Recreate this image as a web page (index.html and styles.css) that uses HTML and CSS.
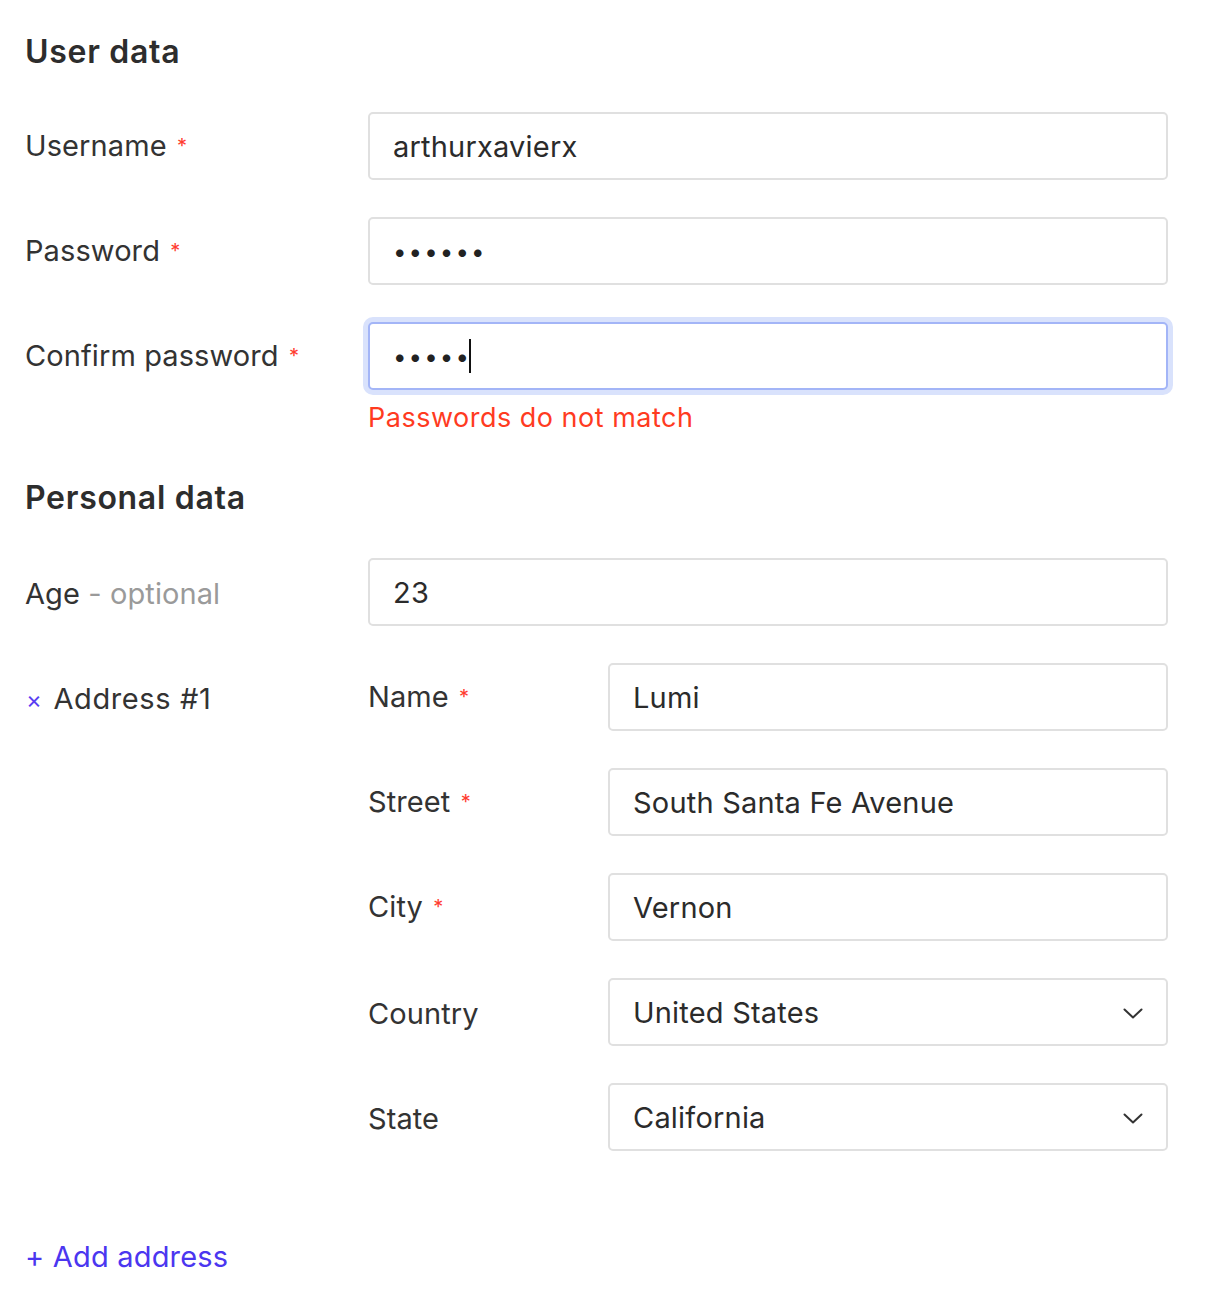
FILE: index.html
```html
<!DOCTYPE html>
<html lang="en">
<head>
<meta charset="utf-8">
<title>Form</title>
<link rel="stylesheet" href="styles.css">
</head>
<body>
<form class="form">
  <h2 class="section-title">User data</h2>

  <div class="row">
    <label class="label">Username <span class="req">*</span></label>
    <div class="control"><input class="input" type="text" value="arthurxavierx"></div>
  </div>

  <div class="row">
    <label class="label">Password <span class="req">*</span></label>
    <div class="control"><div class="input dots">••••••</div></div>
  </div>

  <div class="row row-error">
    <label class="label">Confirm password <span class="req">*</span></label>
    <div class="control">
      <div class="input dots focused">•••••<span class="caret"></span></div>
    </div>
  </div>
  <div class="row-msg">
    <div></div>
    <div class="error">Passwords do not match</div>
  </div>

  <h2 class="section-title second">Personal data</h2>

  <div class="row">
    <label class="label">Age <span class="optional">- optional</span></label>
    <div class="control"><input class="input" type="text" value="23"></div>
  </div>

  <div class="address">
    <div class="address-title"><span class="remove">×</span> Address #1</div>
    <div class="address-fields">
      <div class="row sub">
        <label class="label">Name <span class="req">*</span></label>
        <div class="control"><input class="input" type="text" value="Lumi"></div>
      </div>
      <div class="row sub">
        <label class="label">Street <span class="req">*</span></label>
        <div class="control"><input class="input" type="text" value="South Santa Fe Avenue"></div>
      </div>
      <div class="row sub">
        <label class="label">City <span class="req">*</span></label>
        <div class="control"><input class="input" type="text" value="Vernon"></div>
      </div>
      <div class="row sub">
        <label class="label">Country</label>
        <div class="control">
          <div class="input select"><span>United States</span>
            <svg class="chev" width="20" height="11" viewBox="0 0 20 11"><path d="M1.5 1.5 L10 9.5 L18.5 1.5" fill="none" stroke="#333" stroke-width="2" stroke-linecap="round" stroke-linejoin="round"/></svg>
          </div>
        </div>
      </div>
      <div class="row sub last">
        <label class="label">State</label>
        <div class="control">
          <div class="input select"><span>California</span>
            <svg class="chev" width="20" height="11" viewBox="0 0 20 11"><path d="M1.5 1.5 L10 9.5 L18.5 1.5" fill="none" stroke="#333" stroke-width="2" stroke-linecap="round" stroke-linejoin="round"/></svg>
          </div>
        </div>
      </div>
    </div>
  </div>

  <a class="add" href="#">+ Add address</a>
</form>
</body>
</html>
```

FILE: styles.css
```css
* { box-sizing: border-box; }
html, body { margin: 0; padding: 0; background: #fff; }
body {
  font-family: Inter, "Noto Sans", "Liberation Sans", sans-serif;
  color: #333;
  font-size: 29px;
}
.form {
  padding: 0 45px 0 25px;
  width: 1213px;
}
.section-title {
  margin: 32px 0 40px;
  font-size: 32px;
  line-height: 40px;
  font-weight: 600;
  color: #2d2d2d;
  letter-spacing: 0.7px;
}
.section-title.second { margin-top: 45px; }
.row {
  display: grid;
  grid-template-columns: 343px 1fr;
  align-items: center;
  height: 68px;
  margin-bottom: 37px;
}
.row-error { margin-bottom: 0; }
.row-msg {
  display: grid;
  grid-template-columns: 343px 1fr;
  margin-top: 13px;
}
.error {
  color: #ff3b1f;
  font-size: 27px;
  line-height: 30px;
  letter-spacing: 0.5px;
}
.label {
  font-size: 29px;
  line-height: 36px;
  padding-top: 3px;
  color: #333;
  letter-spacing: 0.1px;
}
.req {
  color: #ff3b30;
  font-size: 20px;
  position: relative;
  top: -3px;
  margin-left: 2px;
}
.optional { color: #9a9a9a; }
.control { height: 68px; }
.input {
  display: flex;
  align-items: center;
  width: 100%;
  height: 68px;
  border: 2px solid #e0e0e0;
  border-radius: 5px;
  padding: 0 23px;
  font-family: inherit;
  font-size: 29px;
  color: #2b2b2b;
  background: #fff;
  letter-spacing: 0.2px;
  outline: none;
}
.dots {
  font-size: 24px;
  letter-spacing: 2.1px;
  color: #222;
}
.focused {
  border-color: #a3b5f7;
  box-shadow: 0 0 0 5px #d9e2fc;
}
.caret {
  display: inline-block;
  width: 2px;
  height: 34px;
  background: #111;
  margin-left: -2px;
}
.address {
  display: grid;
  grid-template-columns: 343px 1fr;
  align-items: start;
}
.address-title {
  height: 68px;
  display: flex;
  align-items: center;
  padding-top: 2px;
  font-size: 29px;
  color: #333;
  letter-spacing: 0.6px;
}
.remove {
  color: #5a3ff2;
  font-size: 24px;
  margin: 2px 11px 0 1px;
}
.row.sub { grid-template-columns: 240px 1fr; }
.row.sub.last { margin-bottom: 0; }
.select { justify-content: space-between; }
.chev { margin-right: 0; margin-top: 2px; }
.add {
  display: inline-block;
  margin-top: 91px;
  font-size: 29px;
  line-height: 30px;
  color: #4b36f0;
  text-decoration: none;
  letter-spacing: 0.2px;
}
```
